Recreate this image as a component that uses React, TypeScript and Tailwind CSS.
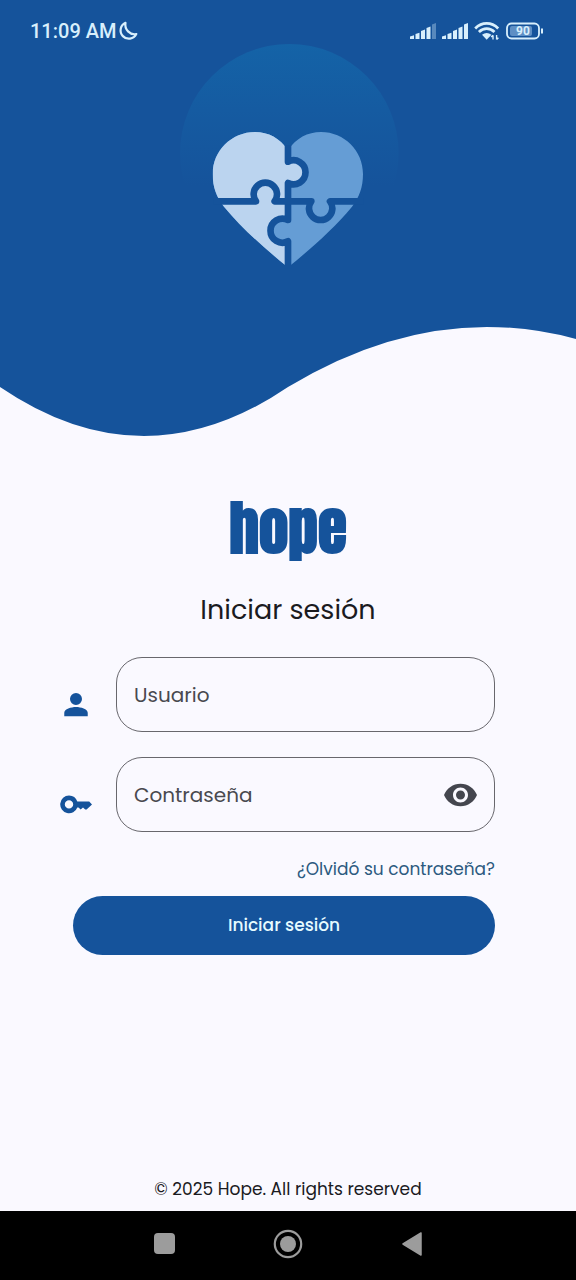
import { useState } from "react";

function Heart() {
  return (
    <svg viewBox="-6 36 720 714" className="h-[238px] w-[240px]" aria-hidden="true">
      <defs>
        <linearGradient id="halo" x1="0" y1="0" x2="0" y2="1">
          <stop offset="0" stopColor="#1463a7" />
          <stop offset="0.3" stopColor="#155ba1" />
          <stop offset="0.65" stopColor="#15539b" />
        </linearGradient>
        <clipPath id="heart">
          <path d="M354 360C330 325 295 306 255 306C185 306 128 362 128 432C128 472 140 502 162 530C215 594 280 652 354 712C428 652 493 594 546 530C568 502 579 472 579 432C579 362 523 306 453 306C413 306 378 325 354 360Z" />
        </clipPath>
      </defs>
      <circle cx="358" cy="370" r="328" fill="url(#halo)" />
      <g clipPath="url(#heart)">
        <rect x="100" y="290" width="500" height="440" fill="#659dd5" />
        <path
          d="M100 290H354V395A36 36 0 1 1 354 459V570A36 36 0 1 0 354 634V730H100Z"
          fill="#bbd4ef"
        />
      </g>
      <g fill="none" stroke="#15539b" strokeWidth="20" strokeLinejoin="round">
        <path d="M354 345V395A36 36 0 1 1 354 459V570A36 36 0 1 0 354 634V715" />
        <path d="M130 514H258A35 35 0 1 1 314 514H424A35 35 0 1 0 480 514H580" />
      </g>
    </svg>
  );
}

function Signal({ weak = false }: { weak?: boolean }) {
  return (
    <svg viewBox="0 0 26 18" className="h-[18px] w-[26px]" aria-hidden="true">
      <g fill="#d8effc">
        <path d="M0 14.4L4 13.2V17H0Z" />
        <path d="M5.5 12L9.5 10.8V17H5.5Z" />
        <path d="M11 9L15 7.6V17H11Z" />
        <path d="M16.5 6L20.5 4.4V17H16.5Z" />
        <path d="M22 2.6L26 1V17H22Z" opacity={weak ? 0.35 : 1} />
      </g>
    </svg>
  );
}

function StatusBar() {
  return (
    <div className="flex h-[42px] items-end justify-between pr-8 pl-[30px] text-[#d8effc]">
      <div className="flex h-[22px] items-center gap-[2px]">
        <span className="font-[Roboto,sans-serif] text-[20px] leading-[22px] font-medium">11:09 AM</span>
        <svg viewBox="0 0 20 20" className="size-5" aria-hidden="true">
          <path
            d="M7.5 1.8A8.3 8.3 0 1 0 18.3 13.1C12 14.2 6.2 8.5 7.5 1.8Z"
            fill="none"
            stroke="currentColor"
            strokeWidth="2.2"
            strokeLinejoin="round"
          />
        </svg>
      </div>
      <div className="flex h-[22px] items-center gap-[6px]">
        <Signal weak />
        <Signal />
        <svg viewBox="0 0 26 20" className="h-5 w-[26px]" aria-hidden="true">
          <g fill="none" stroke="currentColor" strokeWidth="2.8">
            <path d="M1.2 7.4C8 .8 17.4.8 24.2 7.4" />
            <path d="M4.9 11C9.6 6.6 15.8 6.6 20.5 11" />
          </g>
          <path d="M8 13.8Q12.7 10.2 17.4 13.8L12.7 18.8Z" fill="currentColor" />
          <path
            d="M19 18.6V14.2M17.2 16L19 14.2M22.6 14V18.6M24.4 16.8L22.6 18.6"
            fill="none"
            stroke="currentColor"
            strokeWidth="1.4"
          />
        </svg>
        <svg viewBox="0 0 38 18" className="h-[18px] w-[38px]" aria-hidden="true">
          <rect x="1" y="1.5" width="32" height="15" rx="4.5" fill="none" stroke="currentColor" strokeWidth="1.8" />
          <rect x="4" y="4" width="22" height="10" rx="2" fill="#5e8fc4" />
          <path d="M36 6.5V11.5" stroke="currentColor" strokeWidth="2" />
          <text x="17" y="13.4" textAnchor="middle" fontFamily="Roboto, sans-serif" fontSize="12" fontWeight="700" fill="currentColor">
            90
          </text>
        </svg>
      </div>
    </div>
  );
}

function PersonIcon() {
  return (
    <svg viewBox="0 0 24 24" className="size-8" fill="#15539b" aria-hidden="true">
      <path d="M12 12a4.5 4.5 0 1 0 0-9 4.5 4.5 0 0 0 0 9ZM3.2 20.4v-2.5c0-2.8 5.2-4.4 8.8-4.4s8.8 1.6 8.8 4.4v2.5Z" />
    </svg>
  );
}

function KeyIcon() {
  return (
    <svg viewBox="0 0 32 32" className="size-8" fill="#15539b" aria-hidden="true">
      <path
        fillRule="evenodd"
        d="M9 6.6a8.8 8.8 0 1 0 8.3 11.8H18.5L20.7 20.6 23 18.4 25.2 20.6H26.6L32 15.4 29.2 12.6H17.3A8.8 8.8 0 0 0 9 6.6ZM9 11.2a4.2 4.2 0 1 1 0 8.4 4.2 4.2 0 0 1 0-8.4Z"
      />
    </svg>
  );
}

const inputClass =
  "peer h-[75px] w-full rounded-[26px] border border-[#68676d] bg-transparent px-[18px] text-[20px] text-[#1b1b1f] outline-none focus:border-[#15539b]";
const labelClass =
  "pointer-events-none absolute inset-y-0 left-[18px] flex items-center text-[20px] text-[#49494f] peer-[:not(:placeholder-shown)]:hidden";

export default function App() {
  const [visible, setVisible] = useState(false);

  return (
    <div className="flex min-h-screen flex-col bg-[#faf9ff] font-[Poppins,Inter,sans-serif] text-[#1b1b1f]">
      <header className="relative pb-[156px]">
        <svg
          viewBox="0 0 576 436"
          preserveAspectRatio="none"
          className="absolute inset-0 h-full w-full"
          aria-hidden="true"
        >
          <path d="M0 0H576V339Q432 300 288 387Q144 485 0 387Z" fill="#15539b" />
        </svg>
        <div className="relative">
          <StatusBar />
          <div className="flex justify-center">
            <Heart />
          </div>
        </div>
      </header>

      <main className="flex flex-1 flex-col pt-14">
        <h1 className="text-center font-[Anton,Impact,sans-serif] text-[59px] leading-[72px] font-bold text-[#15539b]">
          hope
        </h1>
        <h2 className="mt-7 text-center text-[27px] leading-9">Iniciar sesión</h2>

        <form className="mt-[29px] flex flex-col pr-[81px] pl-[60px]" onSubmit={(e) => e.preventDefault()}>
          <div className="flex items-center gap-6">
            <span className="shrink-0 pt-5">
              <PersonIcon />
            </span>
            <div className="relative flex-1">
              <input id="user" type="text" placeholder=" " autoComplete="username" className={inputClass} />
              <label htmlFor="user" className={labelClass}>
                Usuario
              </label>
            </div>
          </div>

          <div className="mt-[25px] flex items-center gap-6">
            <span className="shrink-0 pt-5">
              <KeyIcon />
            </span>
            <div className="relative flex-1">
              <input
                id="password"
                type={visible ? "text" : "password"}
                placeholder=" "
                autoComplete="current-password"
                className={inputClass}
              />
              <label htmlFor="password" className={labelClass}>
                Contraseña
              </label>
              <button
                type="button"
                aria-label="Mostrar contraseña"
                aria-pressed={visible}
                onClick={() => setVisible(!visible)}
                className="absolute inset-y-0 right-[18px] flex items-center"
              >
                <svg viewBox="1 4 22 16" className="h-6 w-[33px]" fill="#44464e" aria-hidden="true">
                  <path d="M12 4.5C7 4.5 2.73 7.61 1 12c1.73 4.39 6 7.5 11 7.5s9.27-3.11 11-7.5c-1.73-4.39-6-7.5-11-7.5zM12 17c-2.76 0-5-2.24-5-5s2.24-5 5-5 5 2.24 5 5-2.24 5-5 5zm0-8c-1.66 0-3 1.34-3 3s1.34 3 3 3 3-1.34 3-3-1.34-3-3-3z" />
                </svg>
              </button>
            </div>
          </div>

          <a href="#recuperar" className="mt-[25px] self-end text-[17px] leading-6 text-[#2c5a80]">
            ¿Olvidó su contraseña?
          </a>
          <button
            type="submit"
            className="mt-[15px] ml-[13px] h-[59px] rounded-full bg-[#15539b] text-[17px] font-medium text-[#e6fbff]"
          >
            Iniciar sesión
          </button>
        </form>
      </main>

      <footer>
        <p className="pb-[10px] text-center text-[17px] leading-6">© 2025 Hope. All rights reserved</p>
        <nav className="flex h-[69px] items-center justify-center gap-[94px] bg-black pb-1 text-[#9c9c9c]">
          <button type="button" aria-label="Recientes" className="flex size-[30px] items-center justify-center">
            <span className="size-[21px] rounded-[4px] bg-[#9c9c9c]" />
          </button>
          <button type="button" aria-label="Inicio" className="flex size-[30px] items-center justify-center">
            <svg viewBox="0 0 30 30" className="size-[30px]" aria-hidden="true">
              <circle cx="15" cy="15" r="13.2" fill="none" stroke="currentColor" strokeWidth="2.2" />
              <circle cx="15" cy="15" r="8" fill="currentColor" />
            </svg>
          </button>
          <button type="button" aria-label="Atrás" className="flex size-[30px] items-center justify-center">
            <svg viewBox="0 0 20 24" className="h-6 w-5" aria-hidden="true">
              <path
                d="M1 12L19 1V23Z"
                fill="currentColor"
                stroke="currentColor"
                strokeWidth="1.5"
                strokeLinejoin="round"
              />
            </svg>
          </button>
        </nav>
      </footer>
    </div>
  );
}
